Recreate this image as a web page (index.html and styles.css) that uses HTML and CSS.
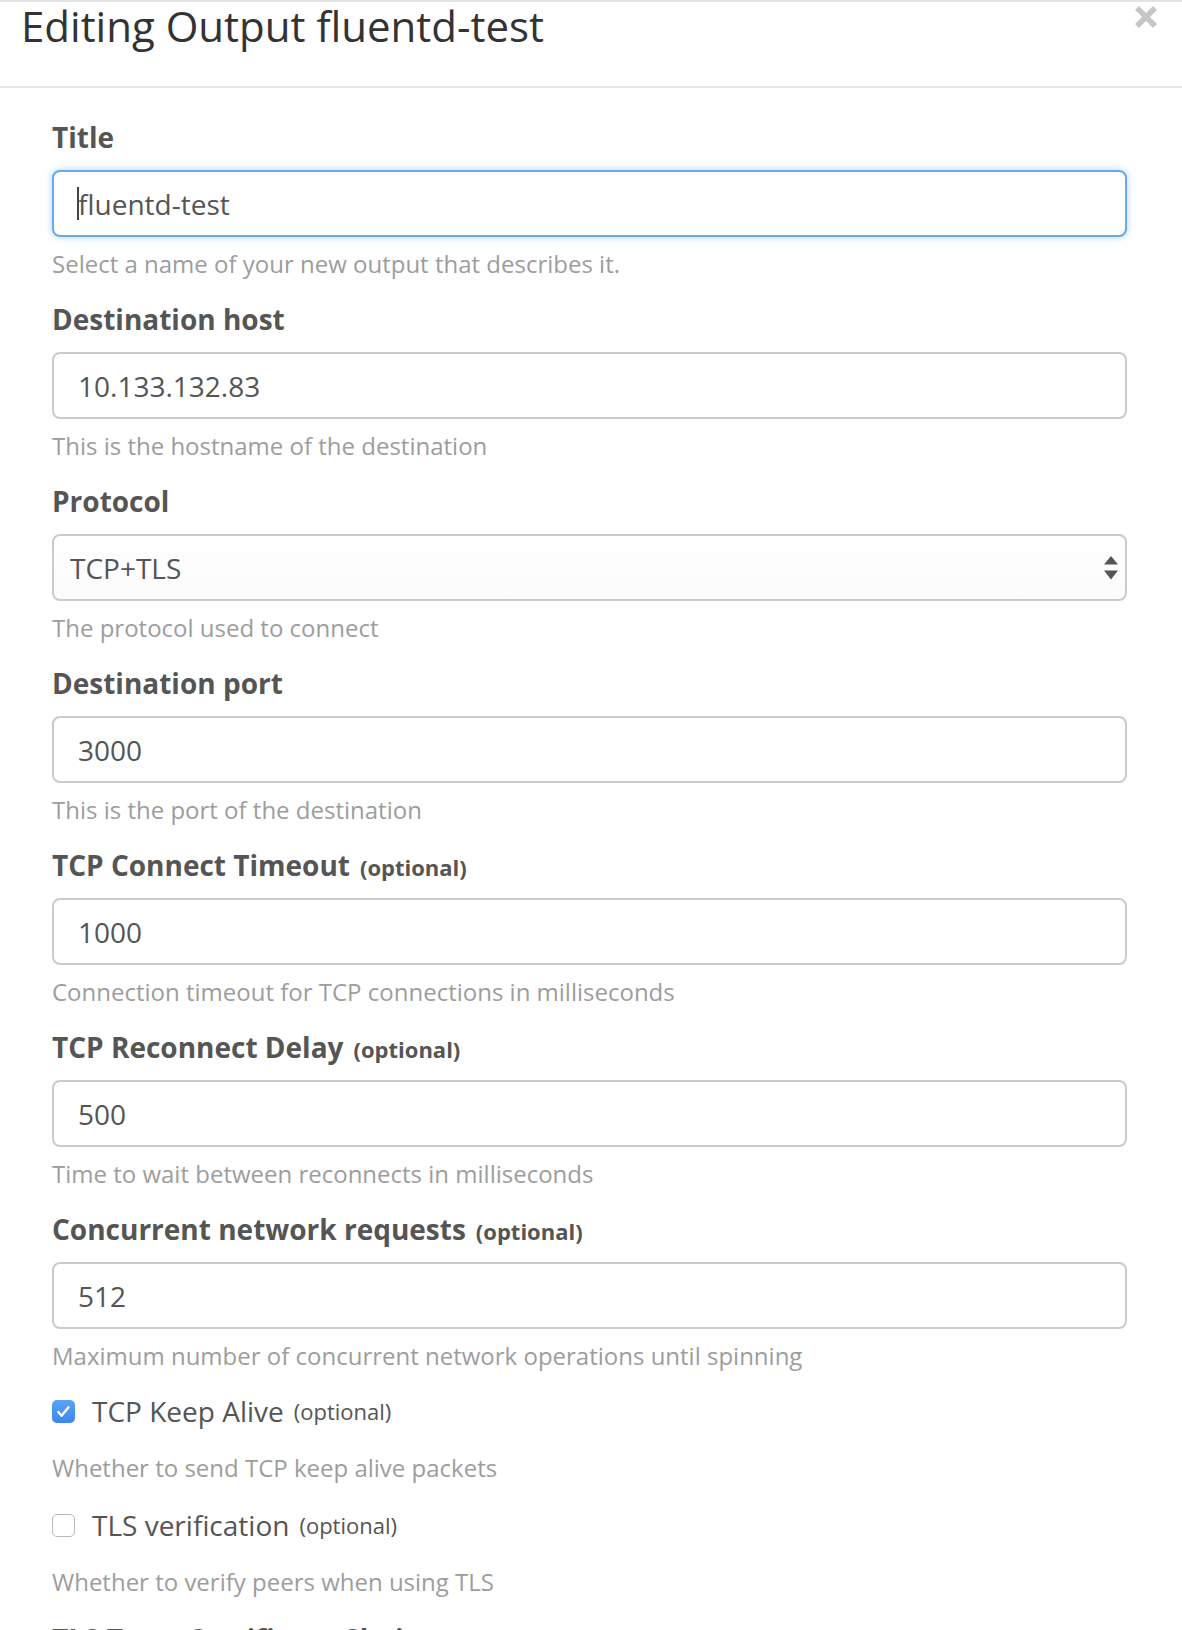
FILE: index.html
```html
<!DOCTYPE html>
<html lang="en">
<head>
<meta charset="utf-8">
<title>Editing Output fluentd-test</title>
<link rel="stylesheet" href="styles.css">
</head>
<body>
<div class="modal">
  <header class="modal-header">
    <h4 class="modal-title">Editing Output fluentd-test</h4>
    <button class="close" type="button" aria-label="Close">
      <svg width="22" height="22" viewBox="0 0 22 22"><path d="M2 2 L20 20 M20 2 L2 20" stroke="#c6c6c6" stroke-width="5.5" fill="none"/></svg>
    </button>
  </header>
  <form class="modal-body">
    <div class="form-group">
      <label class="control-label">Title</label>
      <div class="input-wrap">
        <input class="form-control focused" type="text" value="fluentd-test">
        <span class="caret-line"></span>
      </div>
      <p class="help-block">Select a name of your new output that describes it.</p>
    </div>
    <div class="form-group">
      <label class="control-label">Destination host</label>
      <input class="form-control" type="text" value="10.133.132.83">
      <p class="help-block">This is the hostname of the destination</p>
    </div>
    <div class="form-group">
      <label class="control-label">Protocol</label>
      <div class="select-wrap">
        <select class="form-control select">
          <option>TCP+TLS</option>
        </select>
        <svg class="select-arrows" width="14" height="24" viewBox="0 0 14 24"><path d="M7 0 L14 8.5 L0 8.5 Z M0 14.5 L14 14.5 L7 23.5 Z" fill="#555"/></svg>
      </div>
      <p class="help-block">The protocol used to connect</p>
    </div>
    <div class="form-group">
      <label class="control-label">Destination port</label>
      <input class="form-control" type="text" value="3000">
      <p class="help-block">This is the port of the destination</p>
    </div>
    <div class="form-group">
      <label class="control-label">TCP Connect Timeout<small class="opt">(optional)</small></label>
      <input class="form-control" type="text" value="1000">
      <p class="help-block">Connection timeout for TCP connections in milliseconds</p>
    </div>
    <div class="form-group">
      <label class="control-label">TCP Reconnect Delay<small class="opt">(optional)</small></label>
      <input class="form-control" type="text" value="500">
      <p class="help-block">Time to wait between reconnects in milliseconds</p>
    </div>
    <div class="form-group">
      <label class="control-label">Concurrent network requests<small class="opt">(optional)</small></label>
      <input class="form-control" type="text" value="512">
      <p class="help-block">Maximum number of concurrent network operations until spinning</p>
    </div>
    <div class="check-group">
      <label class="checkbox">
        <span class="box checked"><svg width="23" height="23" viewBox="0 0 23 23"><path d="M6.3 12 L9.6 15.8 L16.5 7.2" stroke="#fff" stroke-width="2.4" fill="none" stroke-linecap="round" stroke-linejoin="round"/></svg></span>
        <span class="check-text">TCP Keep Alive</span><small class="check-opt">(optional)</small>
      </label>
      <p class="help-block check-help">Whether to send TCP keep alive packets</p>
    </div>
    <div class="check-group">
      <label class="checkbox">
        <span class="box"></span>
        <span class="check-text">TLS verification</span><small class="check-opt">(optional)</small>
      </label>
      <p class="help-block check-help">Whether to verify peers when using TLS</p>
    </div>
    <div class="form-group">
      <label class="control-label">TLS Trust Certificate Chain<small class="opt">(optional)</small></label>
    </div>
  </form>
</div>
</body>
</html>
```
FILE: styles.css
```css
html, body {
  margin: 0;
  padding: 0;
  background: #fff;
}

body {
  font-family: "Open Sans", "Noto Sans", sans-serif;
  color: #555;
  overflow: hidden;
}

.modal {
  border-top: 2px solid #e3e3e3;
}

.modal-header {
  display: flex;
  justify-content: space-between;
  align-items: flex-start;
  padding: 1px 25px 37px 21px;
  border-bottom: 2px solid #e5e5e5;
}

.modal-title {
  margin: 0;
  font-size: 42px;
  line-height: 46px;
  font-weight: 400;
  color: #333;
}

.close {
  margin: 3px 0 0;
  padding: 0;
  border: 0;
  background: transparent;
  width: 22px;
  height: 22px;
  display: block;
}

.close svg {
  display: block;
}

.modal-body {
  display: block;
  padding: 31px 55px 0 52px;
}

.form-group {
  margin-bottom: 19px;
}

.control-label {
  display: block;
  font-size: 28px;
  line-height: 36px;
  font-weight: 700;
  color: #555;
  margin-bottom: 15px;
}

.opt {
  font-size: 22px;
  line-height: 1;
  font-weight: 700;
  margin-left: 10px;
}

.form-control {
  display: block;
  box-sizing: border-box;
  width: 100%;
  height: 67px;
  margin: 0;
  padding: 0 24px;
  border: 2px solid #cbcbcb;
  border-radius: 8px;
  background: #fff;
  font-family: "Open Sans", "Noto Sans", sans-serif;
  font-size: 28px;
  color: #555;
  outline: none;
}

.form-control.focused {
  border-color: #6aaae8;
  box-shadow: 0 0 7px rgba(102, 175, 233, 0.55);
}

.input-wrap {
  position: relative;
}

.caret-line {
  position: absolute;
  left: 25px;
  top: 17px;
  width: 2px;
  height: 33px;
  background: #444;
}

.select-wrap {
  position: relative;
}

.select {
  -webkit-appearance: none;
  appearance: none;
  padding-left: 16px;
  background: linear-gradient(#ffffff, #fbfbfb);
}

.select-arrows {
  position: absolute;
  right: 9px;
  top: 22px;
}

.help-block {
  margin: 9px 0 0;
  font-size: 24px;
  line-height: 36px;
  color: #9d9d9d;
}

.check-group {
  margin-bottom: 21px;
}

.checkbox {
  display: flex;
  align-items: center;
  height: 36px;
  font-size: 28px;
  line-height: 36px;
  color: #555;
}

.box {
  box-sizing: border-box;
  width: 23px;
  height: 23px;
  border: 1.5px solid #b8b8b8;
  border-radius: 5px;
  background: #fff;
  margin-right: 17px;
  flex: none;
}

.box.checked {
  border: 0;
  background: linear-gradient(#5aa2f7, #3b87ee);
}

.box svg {
  display: block;
}

.check-opt {
  font-size: 22px;
  line-height: 1;
  margin-left: 10px;
}

.check-help {
  margin-top: 21px;
}
```
